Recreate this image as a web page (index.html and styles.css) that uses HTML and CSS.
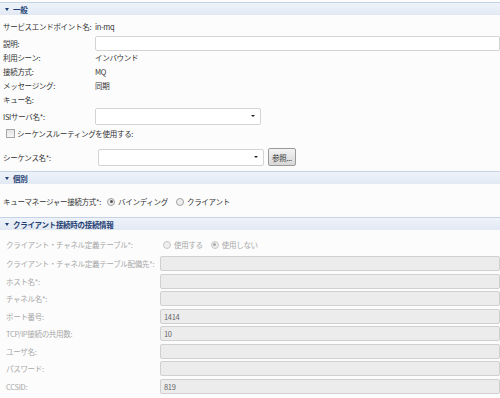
FILE: index.html
```html
<!DOCTYPE html>
<html lang="ja">
<head>
    <meta charset="UTF-8">
    <title>MQ エンドポイント</title>
    <link rel="stylesheet" href="styles.css">
</head>
<body>
    <div class="section-head"><span class="tri"></span>一般</div>
    <div class="section general">
        <div class="row first"><span class="label">サービスエンドポイント名:</span><span>in-mq</span></div>
        <div class="row"><span class="label">説明:</span><span class="input wide"></span></div>
        <div class="row"><span class="label">利用シーン:</span><span>インバウンド</span></div>
        <div class="row"><span class="label">接続方式:</span><span>MQ</span></div>
        <div class="row"><span class="label">メッセージング:</span><span>同期</span></div>
        <div class="row"><span class="label">キュー名:</span></div>
        <div class="row tall"><span class="label">ISIサーバ名*:</span><span class="select"><span class="caret"></span></span></div>
        <div class="row check-row"><span class="checkbox"></span>シーケンスルーティングを使用する:</div>
        <div class="row tall seq"><span class="label">シーケンス名*:</span><span class="select"><span class="caret"></span></span><span class="button">参照...</span></div>
    </div>

    <div class="section-head"><span class="tri"></span>個別</div>
    <div class="section specific">
        <div class="row qm">
            <span class="qm-label">キューマネージャー接続方式*:</span>
            <span class="radio on"></span><span class="opt">バインディング</span>
            <span class="radio"></span><span class="opt">クライアント</span>
        </div>
    </div>

    <div class="section-head"><span class="tri"></span>クライアント接続時の接続情報</div>
    <div class="section client">
        <div class="row"><span class="label">クライアント・チャネル定義テーブル*:</span>
            <span class="radio"></span><span class="opt">使用する</span>
            <span class="radio on"></span><span class="opt">使用しない</span>
        </div>
        <div class="row"><span class="label">クライアント・チャネル定義テーブル配備先*:</span><span class="input"></span></div>
        <div class="row"><span class="label">ホスト名*:</span><span class="input"></span></div>
        <div class="row"><span class="label">チャネル名*:</span><span class="input"></span></div>
        <div class="row"><span class="label">ポート番号:</span><span class="input">1414</span></div>
        <div class="row"><span class="label">TCP/IP接続の共用数:</span><span class="input">10</span></div>
        <div class="row"><span class="label">ユーザ名:</span><span class="input"></span></div>
        <div class="row"><span class="label">パスワード:</span><span class="input"></span></div>
        <div class="row"><span class="label">CCSID:</span><span class="input">819</span></div>
    </div>
</body>
</html>
```

FILE: styles.css
```css
body {
    margin: 0;
    padding-top: 2px;
    background: #fcfcfc;
    color: #333;
    font-family: "Noto Sans CJK JP", "DejaVu Sans", sans-serif;
    font-size: 7.5px;
    letter-spacing: -0.3px;
    width: 500px;
    height: 398px;
    overflow: hidden;
    white-space: nowrap;
}
.section-head {
    height: 12px;
    display: flex;
    align-items: center;
    padding-left: 5px;
    background: linear-gradient(#eef3fa, #e2e9f3);
    border-top: 1px solid #c6d3e4;
    color: #1f3f73;
    font-weight: bold;
}
.tri {
    width: 0;
    height: 0;
    border-left: 2.5px solid transparent;
    border-right: 2.5px solid transparent;
    border-top: 3px solid #1f3f73;
    margin-right: 4px;
}
.section {
    padding-left: 3px;
}
.general {
    padding-top: 4px;
    padding-bottom: 5px;
}
.row {
    display: flex;
    align-items: center;
    height: 14px;
}
.row.first {
    margin-bottom: 3px;
}
.label {
    width: 92px;
    flex-shrink: 0;
}
.input {
    flex: 1;
    height: 13px;
    background: #fff;
    border: 1px solid #d4d4d4;
    border-radius: 2px;
    display: flex;
    align-items: center;
    padding-left: 3px;
}
.row.tall {
    height: 18px;
    margin-top: 1px;
}
.select {
    width: 164px;
    height: 15px;
    background: #fff;
    border: 1px solid #d4d4d4;
    border-radius: 2px;
    position: relative;
}
.caret {
    position: absolute;
    right: 5px;
    top: 6px;
    border-left: 2px solid transparent;
    border-right: 2px solid transparent;
    border-top: 2.5px solid #222;
}
.check-row {
    height: 16px;
    padding-left: 3px;
}
.checkbox {
    width: 7px;
    height: 7px;
    border: 1px solid #a5a5a5;
    background: linear-gradient(#e4e4e4, #f6f6f6);
    margin-right: 2px;
}
.row.seq {
    margin-top: 7px;
}
.seq .label {
    width: 95px;
}
.button {
    margin-left: 4px;
    height: 16px;
    padding: 0 3px;
    display: flex;
    align-items: center;
    border: 1px solid #9a9a9a;
    border-radius: 2px;
    background: linear-gradient(#f4f4f4, #d8d8d8);
}
.specific {
    padding-top: 9px;
    padding-bottom: 7px;
}
.qm {
    height: 17px;
}
.qm-label {
    margin-right: 3px;
}
.opt {
    margin-right: 5px;
}
.radio {
    width: 6px;
    height: 6px;
    flex-shrink: 0;
    border: 1px solid #a0a0a0;
    border-radius: 50%;
    background: #eee;
    margin: 0 3px;
    position: relative;
}
.radio.on::after {
    content: "";
    position: absolute;
    left: 1.5px;
    top: 1.5px;
    width: 3px;
    height: 3px;
    border-radius: 50%;
    background: #555;
}
.client {
    padding-top: 7px;
    padding-left: 6px;
    color: #a8a8a8;
}
.client .row {
    height: 15px;
    margin-bottom: 2.5px;
}
.client .row:first-child {
    margin-bottom: 4px;
}
.client .label {
    width: 154px;
}
.client .input {
    background: #ececec;
    border-color: #d0d0d0;
    color: #666;
}
.client .radio {
    border-color: #c8c8c8;
}
.client .radio.on::after {
    background: #aaa;
}
```
